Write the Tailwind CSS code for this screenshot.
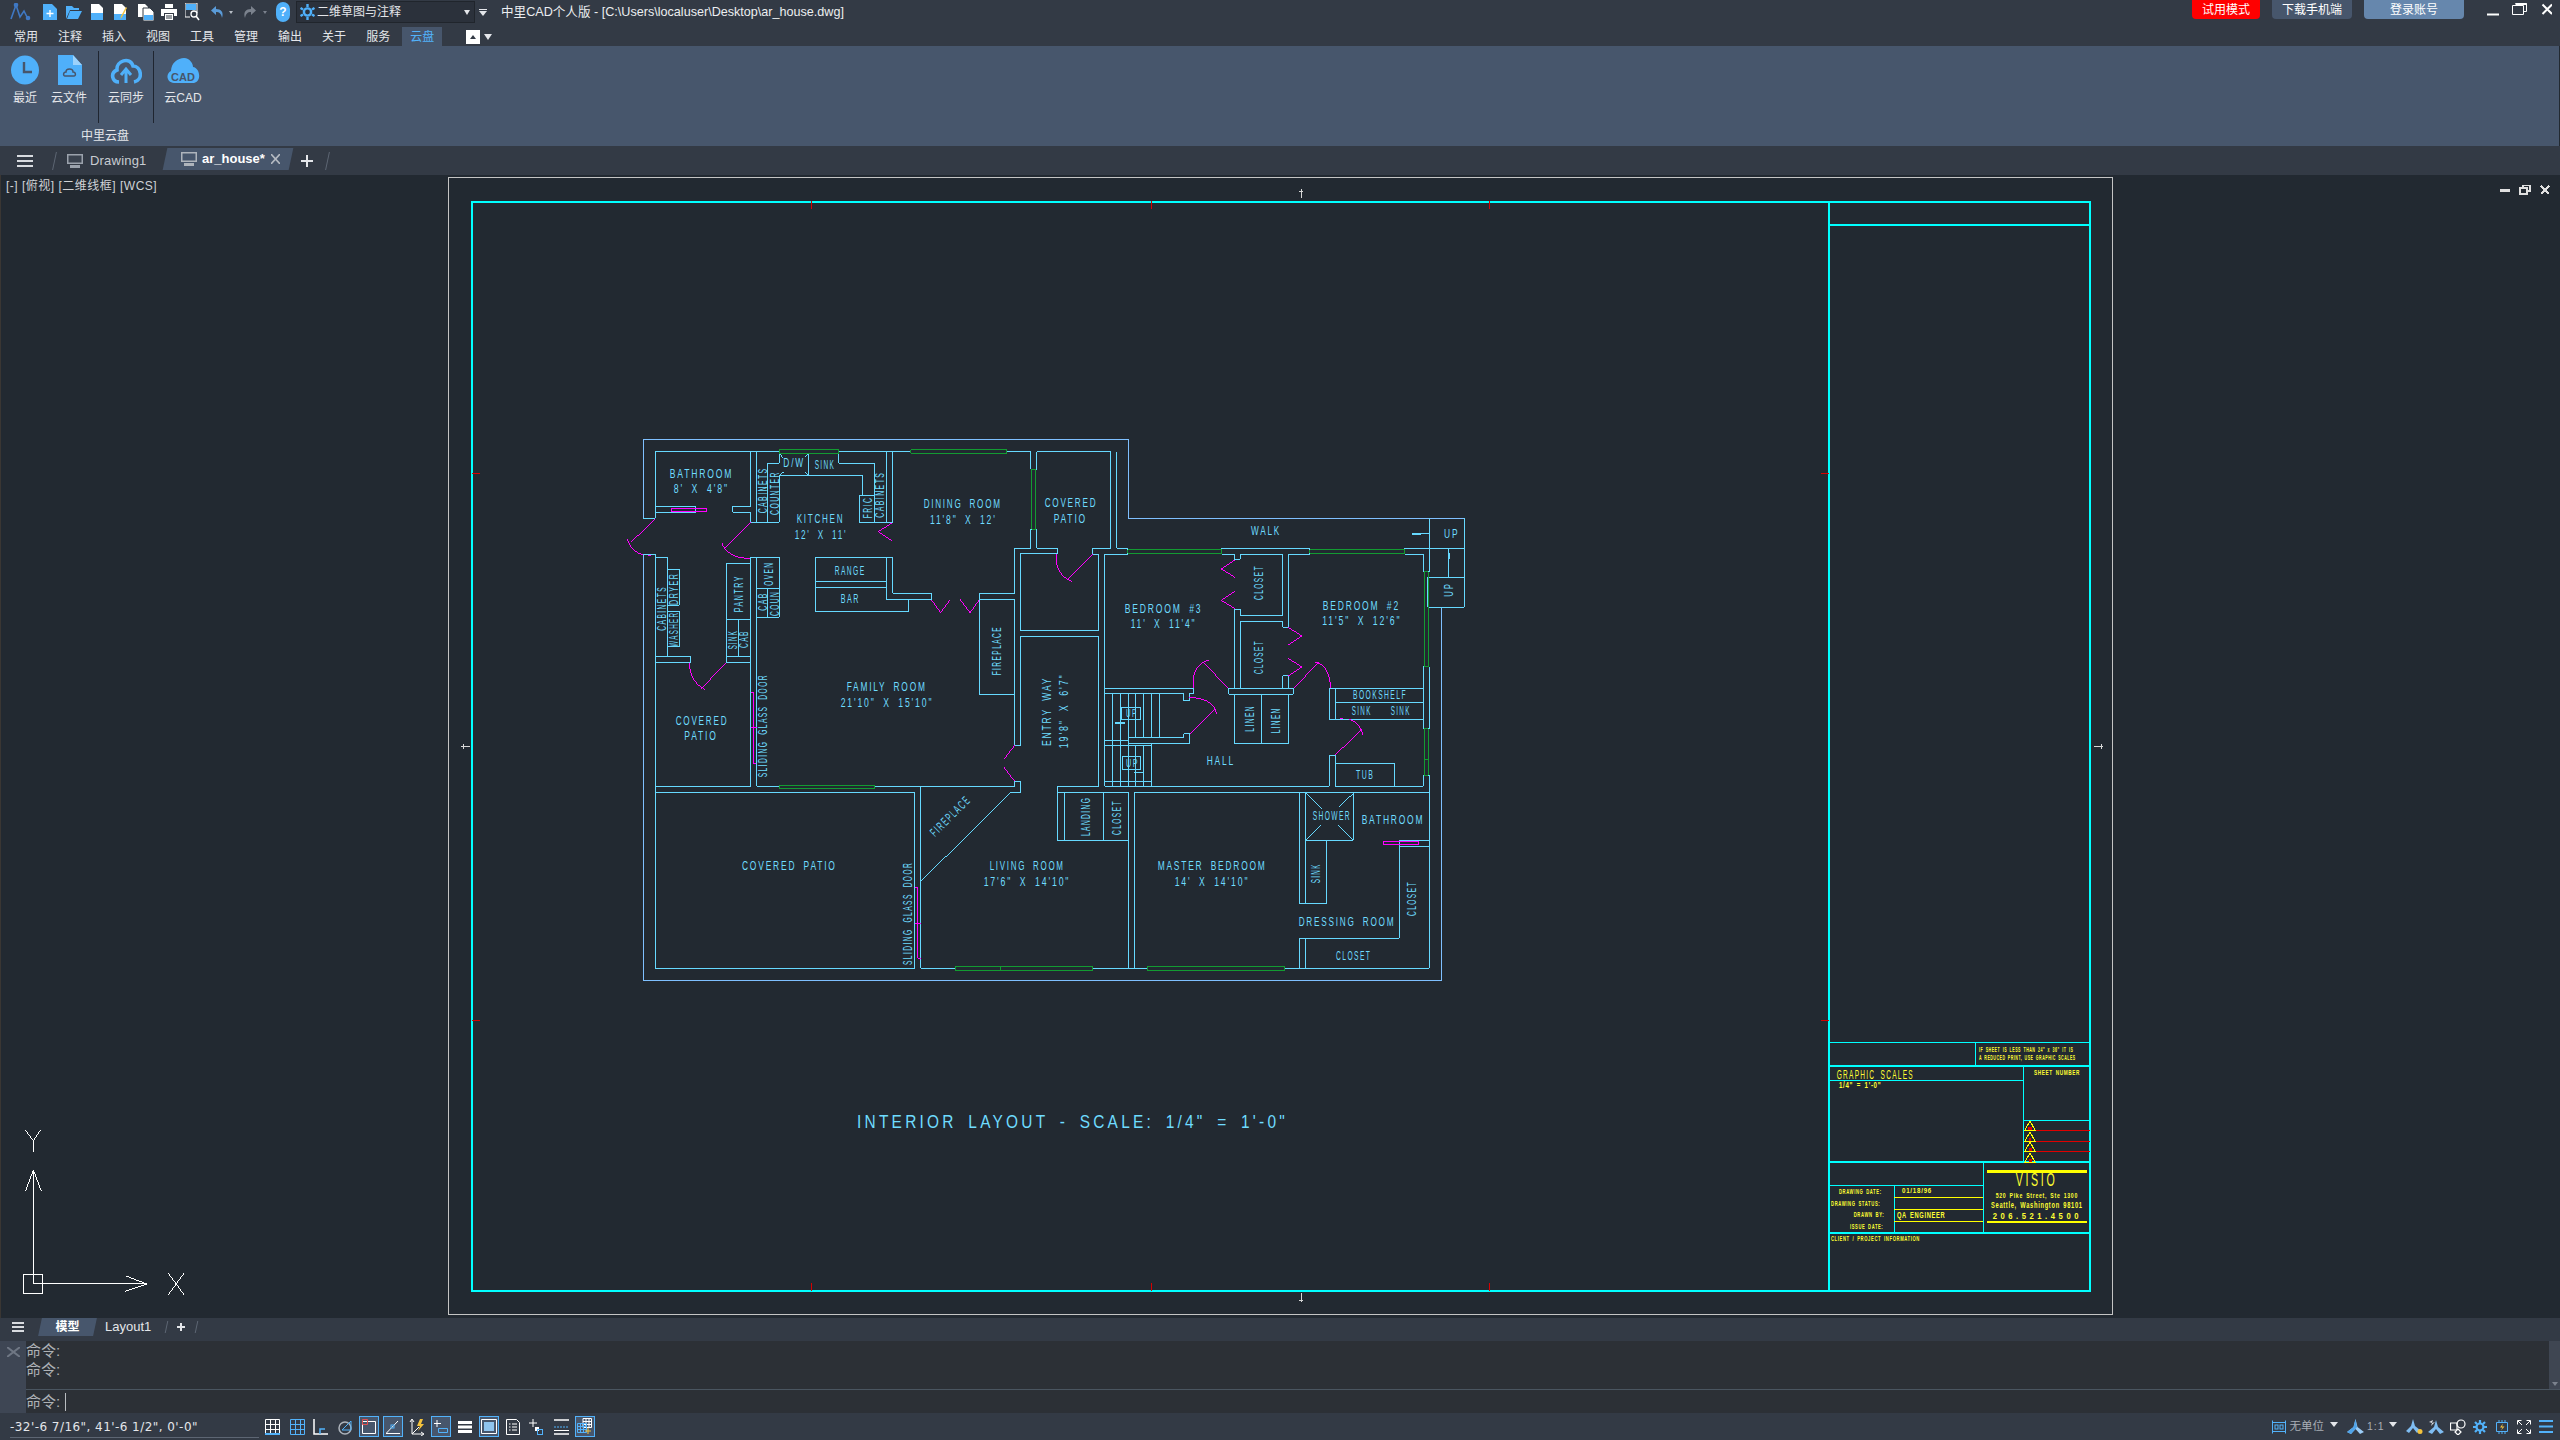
<!DOCTYPE html>
<html lang="zh">
<head>
<meta charset="utf-8">
<title>中里CAD</title>
<script src="https://cdn.jsdelivr.net/npm/@tailwindcss/browser@4"></script>
</head>
<body class="m-0 bg-[#222931] overflow-hidden">
<div class="w-[2560px] h-[1440px] flex flex-col font-['Liberation_Sans','Noto_Sans_CJK_SC',sans-serif] text-[12px] text-[#e4e6ea]">

  <!-- title row -->
  <div class="h-[27px] shrink-0 bg-[#333a45] flex items-start">
    <div class="h-[24px] flex items-center pl-[10px] w-full">
      <svg width="22" height="18" viewBox="0 0 22 18" fill="none" stroke="#3f78c4" stroke-width="1.6"><path d="M1 16 L6 2 L10 14 L14 8 L17 14"/><circle cx="6" cy="2" r="1.5" fill="#3f78c4"/><circle cx="18" cy="15" r="1.5" fill="#3f78c4"/></svg>
      <svg class="ml-[11px]" width="14" height="16" viewBox="0 0 14 16"><path d="M0 0H9L14 5V16H0Z" fill="#4fb0fa"/><path d="M7 6V13M3.5 9.5H10.5" stroke="#fff" stroke-width="1.4"/></svg>
      <svg class="ml-[9px]" width="16" height="14" viewBox="0 0 16 14"><path d="M0 14V1H6L8 3H13V5H4L0 14ZM4 6H16L12 14H1Z" fill="#4fb0fa"/></svg>
      <svg class="ml-[9px]" width="12" height="16" viewBox="0 0 12 16"><path d="M0 0H8L12 4V16H0Z" fill="#fff"/><path d="M0 9H12V16H0Z" fill="#4fb0fa"/></svg>
      <svg class="ml-[11px]" width="14" height="16" viewBox="0 0 14 16"><path d="M0 0H8L12 4V16H0Z" fill="#fff"/><path d="M0 10H12V16H0Z" fill="#4fb0fa"/><path d="M13 4L8 13L6.5 15L7 12L12 3Z" fill="#f3c23d"/></svg>
      <svg class="ml-[10px]" width="16" height="17" viewBox="0 0 16 17"><path d="M0 0H7L10 3V13H0Z" fill="#fff"/><path d="M5 4H12L16 8V17H5Z" fill="#fff" stroke="#333a45"/><path d="M6 11H15V16H6Z" fill="#4fb0fa"/></svg>
      <svg class="ml-[7px]" width="16" height="16" viewBox="0 0 16 16"><path d="M4 0H12V4H4ZM0 5H16V12H13V9H3V12H0Z" fill="#fff"/><path d="M4 10H12V16H4Z" fill="#fff"/><path d="M5 12H11M5 14H11" stroke="#333a45"/></svg>
      <svg class="ml-[8px]" width="15" height="18" viewBox="0 0 15 18" fill="none"><path d="M0 0H12V10M0 0V14H5" stroke="#fff" stroke-width="1"/><path d="M1 1H11V7H1Z" fill="#4fb0fa"/><circle cx="9" cy="11" r="3" stroke="#fff" stroke-width="1.3"/><path d="M11 13L14 17" stroke="#fff" stroke-width="1.5"/></svg>
      <svg class="ml-[11px]" width="13" height="13" viewBox="0 0 13 13" fill="none"><path d="M5 0L0 4.5L5 9V6C8 6 10 7 11 12C13 6 10 3 5 3Z" fill="#5a9bd8"/></svg>
      <span class="ml-[5px] w-0 h-0 border-x-[2px] border-x-transparent border-t-[3px] border-t-[#b8bec6]"></span>
      <svg class="ml-[10px]" width="13" height="13" viewBox="0 0 13 13"><path d="M8 0L13 4.5L8 9V6C5 6 3 7 2 12C0 6 3 3 8 3Z" fill="#7b828d"/></svg>
      <span class="ml-[7px] w-0 h-0 border-x-[2px] border-x-transparent border-t-[3px] border-t-[#7b828d]"></span>
      <span class="ml-[9px] w-[14px] h-[20px] rounded-full bg-[#4fb0fa] text-white text-[12px] font-bold flex items-center justify-center">?</span>
      <div class="ml-[6px] w-[179px] h-[22px] bg-[#2b313b] border border-[#20252c] flex items-center">
        <svg class="ml-[3px]" width="15" height="16" viewBox="0 0 15 16" fill="none" stroke="#4fb0fa"><circle cx="7.5" cy="8" r="3.6" stroke-width="2.4"/><path d="M7.5 0V3M7.5 13V16M0.5 4L3 5.5M12 10.5L14.500 12M0.500 12L3 10.5M12 5.500L14.500 4" stroke-width="2.400"/></svg>
        <span class="ml-[2px] text-[12px] text-[#e4e6ea]">二维草图与注释</span>
        <span class="ml-auto mr-[4px] w-0 h-0 border-x-[3px] border-x-transparent border-t-[5px] border-t-[#e4e6ea]"></span>
      </div>
      <span class="ml-[4px] flex flex-col items-center gap-[1px]"><span class="w-[8px] h-px bg-[#e4e6ea]"></span><span class="w-0 h-0 border-x-[4px] border-x-transparent border-t-[5px] border-t-[#e4e6ea]"></span></span>
      <span class="ml-[14px] text-[12.600px] text-[#eceef0] whitespace-nowrap">中里CAD个人版 - [C:\Users\localuser\Desktop\ar_house.dwg]</span>
      <div class="ml-auto self-start h-[19px] flex text-[12px]">
        <span class="w-[68px] h-[19px] rounded-b-[4px] bg-[#ff0000] text-white flex items-center justify-center">试用模式</span>
        <span class="ml-[12px] w-[80px] h-[19px] rounded-b-[4px] bg-[#47566c] text-white flex items-center justify-center">下载手机端</span>
        <span class="ml-[12px] w-[100px] h-[19px] rounded-b-[4px] bg-[#6687ad] text-white flex items-center justify-center">登录账号</span>
        <svg class="ml-[23px]" width="65" height="19" viewBox="0 0 65 19" fill="none" stroke="#fff"><path d="M0 14.500H12" stroke-width="2"/><path d="M25.500 5.500V14.500H36.500V5.500ZM28.500 3.500H39.500V11.500H36.500" stroke-width="1"/><path d="M28.500 4H39.500" stroke-width="2"/><path d="M55.500 4.500L65 14M65 4.500L55.500 14" stroke-width="2"/></svg>
        <span class="w-[8px]"></span>
      </div>
    </div>
  </div>

  <!-- menu row -->
  <div class="h-[19px] shrink-0 bg-[#333a45] flex items-center pl-[14px] gap-[20px] text-[12px] text-[#e4e6ea]">
    <span>常用</span><span>注释</span><span>插入</span><span>视图</span><span>工具</span><span>管理</span><span>输出</span><span>关于</span><span>服务</span>
    <span class="-mx-[8px] px-[8px] h-[19px] bg-[#47566c] text-[#52b2fa] flex items-center">云盘</span>
    <span class="ml-[12px] w-[14px] h-[14px] bg-white flex items-center justify-center"><span class="w-0 h-0 border-x-[3px] border-x-transparent border-b-[4px] border-b-[#333a45]"></span></span>
    <span class="-ml-[16px] w-0 h-0 border-x-[4px] border-x-transparent border-t-[6px] border-t-[#e4e6ea]"></span>
  </div>

  <!-- ribbon -->
  <div class="h-[100px] shrink-0 bg-[#47566c] mr-px">
    <div class="w-[212px] flex flex-col">
      <div class="flex h-[77px] pt-[5px]">
        <div class="ml-[4px] w-[42px] flex flex-col items-center pt-[4px]">
          <svg width="28" height="30" viewBox="0 0 28 30"><ellipse cx="14" cy="15" rx="14" ry="14.500" fill="#4fb0fa"/><path d="M13 7V17H21" fill="none" stroke="#47566c" stroke-width="2.400"/></svg>
          <span class="mt-[6px] leading-[14px]">最近</span>
        </div>
        <div class="w-[46px] flex flex-col items-center pt-[4px]">
          <svg width="25" height="30" viewBox="0 0 25 30"><path d="M1 0H16L25 10V30H1Z" fill="#4fb0fa"/><path d="M16 0L25 10H16Z" fill="#9cd2fb"/><path d="M8 21C6 21 6 17 9 17C9 13 16 13 16 17C19 17 19 21 17 21Z" fill="none" stroke="#47566c" stroke-width="1.500"/></svg>
          <span class="mt-[6px] leading-[14px]">云文件</span>
        </div>
        <span class="ml-[6px] w-px h-[72px] bg-[#1f2530]"></span>
        <div class="w-[54px] flex flex-col items-center pt-[4px]">
          <svg width="32" height="30" viewBox="0 0 32 30" fill="none"><path d="M9 27C2 27 0 18 7 15C6 6 20 1 23 11C31 11 34 25 24 27" stroke="#4fb0fa" stroke-width="3.600"/><path d="M16 28V15M11 20L16 14L21 20" stroke="#4fb0fa" stroke-width="3"/></svg>
          <span class="mt-[6px] leading-[14px]">云同步</span>
        </div>
        <span class="w-px h-[72px] bg-[#1f2530]"></span>
        <div class="w-[58px] flex flex-col items-center pt-[4px]">
          <svg width="34" height="30" viewBox="0 0 34 30"><path d="M8 28C1 28 -1 19 5 16C5 8 12 3 18 3C24 3 27 9 27 12C34 13 36 26 28 28Z" fill="#4fb0fa"/><text x="17" y="26" text-anchor="middle" font-size="11" font-weight="700" fill="#47566c">CAD</text></svg>
          <span class="mt-[6px] leading-[14px]">云CAD</span>
        </div>
      </div>
      <div class="pt-[6px] leading-[14px] text-center pr-[2px]">中里云盘</div>
    </div>
  </div>

  <!-- drawing tabs -->
  <div class="h-[29px] shrink-0 bg-[#333a45] flex items-center text-[13px]">
    <span class="ml-[17px] w-[16px] h-[12px] border-y-2 border-[#d8dbe0] flex items-center"><span class="w-full h-[2px] bg-[#d8dbe0]"></span></span>
    <span class="ml-[21px] w-px h-[18px] bg-[#5d6673] -skew-x-12"></span>
    <svg class="ml-[12px]" width="16" height="14" viewBox="0 0 16 14"><path d="M0 0H16V10H0Z" fill="#9ba2ac"/><path d="M1.500 1.500H14.500V8.500H1.500Z" fill="#3a424e"/><path d="M3 11H13V14H3Z" fill="#9ba2ac"/></svg>
    <span class="ml-[7px] w-[53px] text-[#c8ccd2] tracking-[0.2px]">Drawing1</span>
    <div class="relative self-start mt-[2px] ml-[22px] w-[126px] h-[22px] flex items-center">
      <span class="absolute inset-0 -skew-x-12 bg-[#47566c]"></span>
      <svg class="relative ml-[16px]" width="16" height="14" viewBox="0 0 16 14"><path d="M0 0H16V10H0Z" fill="#aeb4bc"/><path d="M1.500 1.500H14.500V8.500H1.500Z" fill="#47566c"/><path d="M3 11H13V14H3Z" fill="#aeb4bc"/></svg>
      <span class="relative ml-[5px] w-[60px] font-bold text-white whitespace-nowrap">ar_house*</span>
      <svg class="relative ml-[9px]" width="9" height="10" viewBox="0 0 9 10"><path d="M0 0L9 10M9 0L0 10" stroke="#b5bac2" stroke-width="1.600"/></svg>
    </div>
    <svg class="ml-[10px]" width="12" height="12" viewBox="0 0 12 12"><path d="M6 0V12M0 6H12" stroke="#e4e6ea" stroke-width="2"/></svg>
    <span class="ml-[14px] w-px h-[18px] bg-[#5d6673] -skew-x-12"></span>
  </div>

  <!-- canvas -->
  <div class="relative h-[1143px] shrink-0 bg-[#222931] border-l border-[#3a3633]">
    <div class="absolute left-[5px] top-[4px] text-[12px] leading-[14px] text-[#cfd2d6] tracking-[0.5px] whitespace-nowrap">[-] [俯视] [二维线框] [WCS]</div>
    <svg class="absolute -left-px top-0" width="2560" height="1143" viewBox="0 175 2560 1143" shape-rendering="crispEdges" fill="none">
      <!-- window controls -->
      <path d="M2500 190.500H2510" stroke="#e0e0e0" stroke-width="3"/>
      <path d="M2520 188H2527V194H2520ZM2523 188V185.500H2530V191H2527" stroke="#e0e0e0" stroke-width="1.500"/>
      <path d="M2541 186L2549 194M2549 186L2541 194" stroke="#e0e0e0" stroke-width="2"/>
      <!-- sheet -->
      <rect x="448.500" y="177.500" width="1664" height="1137" stroke="#c4c4c4"/>
      <rect x="472" y="202" width="1618" height="1089" stroke="#00ffff" stroke-width="2"/>
      <path d="M1829 202V1291M1829 225H2090M1829 1066H2090M1829 1162H2090M1829 1233H2090" stroke="#00ffff" stroke-width="2"/>
      <path d="M1829 1042.500H2090M1975.500 1042V1066M1829 1080.500H2023M2023.500 1066V1162M2023 1120.500H2090M1983.500 1162V1233M1829 1185.500H1983M1894.500 1185V1233" stroke="#00ffff"/>
      <path d="M1894 1197.500H1983M1894 1209.500H1983M1894 1221.500H1983" stroke="#ffff00"/>
      <path d="M1987 1171.500H2087" stroke="#ffff00" stroke-width="3"/>
      <path d="M1987 1222H2087" stroke="#ffff00" stroke-width="2"/>
      <path d="M2024 1130.500H2090M2024 1141.500H2090M2024 1151.500H2090" stroke="#e00000"/>
      <path d="M2025 1130L2030 1121L2035 1130ZM2025 1141L2030 1132L2035 1141ZM2025 1151L2030 1142L2035 1151ZM2025 1162L2030 1153L2035 1162Z" stroke="#ffff00"/>
      <path d="M2028 1128H2032M2029 1139H2031M2029 1149H2032M2029 1160H2032" stroke="#e00000" stroke-width="3"/>
      <!-- ticks -->
      <path d="M811.500 201V209M1151.500 201V209M1489.500 201V209M811.500 1283V1291M1151.500 1283V1291M1489.500 1283V1291M472 473.500H480M472 1020.500H480M1821 473.500H1829M1821 1020.500H1829" stroke="#d80000"/>
      <path d="M1301 189V198M1299 191H1303M1301 1293V1302M1299 1300H1303M461 746.500H470M463 744V749M2094 746.500H2103M2101 744V749" stroke="#d8d8d8"/>
      <!-- UCS -->
      <g transform="scale(.33333) translate(0 3300)" stroke="#ffffff" stroke-width="3">
        <path d="M70 523H128V580H70ZM100 215V552H440M76 274L100 210L124 274M378 528L440 552L376 574M76 90L100 122L122 90M100 122V155M505 520L552 584M552 520L505 584"/>
      </g>
      <!-- floor plan -->
      <g stroke-width="3">
        <g transform="translate(620 420) scale(.33333)" stroke="#66d9ff">
          <path stroke="#7fc0ff" d="M70 295V58H1525M70 403V1020"/>
          <path d="M70 295H106M106 95V295M106 95H478M656 95H873M1160 95H1232M1250 95H1473M106 259H228V277H106M392 95V259H338V277H392V307M410 95V307M392 307H478M442 307V130H478V100M478 307V166H727V226M566 100V166M656 100V130H763V307M727 226H718V307M718 226H763M718 307H818M800 95V307M818 95V307"/>
          <path d="M478 100L490 115M566 100L555 112M478 166L492 155M566 166L555 155"/>
          <path d="M1232 95V148H1250V95M1232 328H1250M1232 328V385H1184V520H1078M1250 328V385H1313V402H1201V631H1436V403H1417V385H1473V95M1490 95V385H1523"/>
          <path d="M70 403H106M106 403V1020M106 412H142V710M392 412V1020M410 412V1020M392 412H478V592H410M410 505H478M442 505V592M320 430H392M320 430V728H392M320 598H392M356 598V710M320 710H392M144 448H178V556H144M144 574H178V681H144M106 710H212V728H106"/>
          <path d="M586 412H818V520H934V539H800V412M586 412V575H866V539M586 484H800M586 502H800M1078 520V824H1184M1078 538H1184V976H1202V649H1436V1020M1184 824V976"/>
          <path stroke="#139b32" d="M478 89H656V101H478ZM873 89H1160V100H873ZM1235 148H1247V328H1235Z"/>
          <g stroke="#ff00ff">
            <path d="M154 265H260V274H154ZM106 296L32 368M22 358C30 385 50 400 70 404M85 406H92M392 307L315 385M306 370C315 395 340 415 390 415M817 308L775 335L815 362M1418 403L1342 480M1310 403C1305 440 1320 470 1355 484M934 539L962 578L990 540M1020 538L1050 578L1078 540M392 817H400V1020M392 922H410M318 728L244 806M210 728C205 760 225 795 255 808"/>
          </g>
        </g>
        <g transform="translate(1000 420) scale(.33333)" stroke="#66d9ff">
          <path stroke="#7fc0ff" d="M385 58V295H1393M1325 562V1020"/>
          <path d="M314 403V1020M383 403H314M314 805H580V822H568V842H551V822H314M383 385V403M665 385H929V403H865V622M665 385V403H703V418H721V403H848V586H721V568H703V805M721 604H848V622H865M865 768V805M848 768H865M848 768V805M721 604V805M686 805H880V823H686V805M703 823V970H866V823M785 823V970M1214 385H1393M1214 385V403H1272V455H1288V295M1288 385H1393M1347 385V472M1284 472H1393M1284 472V562H1393M1393 295V562M1270 740H1288V926H1270V740M988 805H1270M1006 805V898M988 805V898H1270M1006 848H1270M296 649V1020"/>
          <path d="M337 823V1020M361 823V1020M385 823V1020M408 823V950M432 823V950M455 823V950M479 823V950M386 952H551V942H569V970H386V952M314 961H385M314 977H385M385 970H455M455 970V1020M408 977V1020M432 977V1020M364 862H422V900H364ZM1288 342H1236"/>
          <path stroke-width="6" d="M1236 342H1262M345 909H375M1347 398V416"/>
          <path stroke="#139b32" d="M383 389H665V400H383ZM929 389H1214V400H929ZM1273 455H1285V740H1273ZM1273 926H1285V1020H1273Z"/>
          <path stroke="#ff00ff" d="M705 420L664 447L705 472M705 514L664 541L705 566M865 622L905 648L865 675M865 715L905 741L865 768M686 805L610 728M627 720C590 730 575 760 580 805M880 805L958 726M945 726C975 730 995 770 990 805M568 834C610 830 645 850 650 882M570 942L645 868M1020 896H1030M1048 898C1070 905 1085 925 1088 945"/>
        </g>
        <g transform="translate(620 700) scale(.33333)" stroke="#66d9ff">
          <path stroke="#7fc0ff" d="M70 180V841H1500"/>
          <path d="M106 180V805H884M106 259H392M106 277H884V805M902 259V805M392 180V259M410 180V259H478M764 259H1184V244H1202V277H1172M902 805H1008M1418 805H1500M902 545L1172 277"/>
          <path stroke="#139b32" d="M478 256H764V266H478ZM1008 799H1418V812H1008Z"/>
          <path stroke="#ff00ff" d="M400 180V190H408M1184 136L1152 178M1152 202L1184 244M884 562H893V775H902M884 670H902"/>
        </g>
        <g transform="translate(1000 700) scale(.33333)" stroke="#66d9ff">
          <path stroke="#7fc0ff" d="M0 841H1325V180"/>
          <path d="M296 180V259H172V421H385M172 277H385V805M193 277V421M310 277V421M403 277V805M314 180V259H988V166H1006V259M403 277H1288V805M1006 190H1184V259M1006 259H1270V226H1288V277M898 277V610H980V421H916M916 277V610M1060 277V421H916M918 280L965 326M1060 280L1018 320M962 376L918 420M1014 376L1058 420M1198 421H1288M1198 439H1288M1198 421V715H898V805M916 715V805M277 805H442M853 805H1288M314 122H385M314 137H455M455 180V259M408 180V259M432 180V259M314 245H455M337 180V259M361 180V259M385 180V259M367 170H422V208H367ZM402 218H430"/>
          <path stroke="#139b32" d="M0 799H277V812H0ZM442 799H853V812H442ZM1273 180V226H1285V180"/>
          <path stroke="#ff00ff" d="M1150 424H1256V434H1150ZM1006 165L1085 88"/>
        </g>
      </g>
      <!-- plan text -->
      <g fill="#6fdcff" stroke="none" shape-rendering="auto" font-family="Liberation Sans">
        <text x="857" y="1128" font-size="19" letter-spacing="4" word-spacing="5" lengthAdjust="spacingAndGlyphs" textLength="431">INTERIOR LAYOUT -   SCALE: 1/4" = 1'-0"</text>
        <g transform="translate(620 420) scale(.33333)" font-size="37" letter-spacing="8" word-spacing="14">
          <text lengthAdjust="spacingAndGlyphs" x="149" y="174" textLength="191">BATHROOM</text>
          <text lengthAdjust="spacingAndGlyphs" x="161" y="220" textLength="166">8' X 4'8"</text>
          <text lengthAdjust="spacingAndGlyphs" x="440" y="280" textLength="138" transform="rotate(-90 440 280)">CABINETS</text>
          <text lengthAdjust="spacingAndGlyphs" x="476" y="285" textLength="132" transform="rotate(-90 476 285)">COUNTER</text>
          <text lengthAdjust="spacingAndGlyphs" x="490" y="142" textLength="65">D/W</text>
          <text lengthAdjust="spacingAndGlyphs" x="584" y="148" textLength="62">SINK</text>
          <text lengthAdjust="spacingAndGlyphs" x="757" y="295" textLength="65" transform="rotate(-90 757 295)">FRIC</text>
          <text lengthAdjust="spacingAndGlyphs" x="792" y="293" textLength="138" transform="rotate(-90 792 293)">CABINETS</text>
          <text lengthAdjust="spacingAndGlyphs" x="530" y="310" textLength="143">KITCHEN</text>
          <text lengthAdjust="spacingAndGlyphs" x="524" y="356" textLength="158">12' X 11'</text>
          <text lengthAdjust="spacingAndGlyphs" x="911" y="264" textLength="234">DINING ROOM</text>
          <text lengthAdjust="spacingAndGlyphs" x="930" y="311" textLength="200">11'8" X 12'</text>
          <text lengthAdjust="spacingAndGlyphs" x="1274" y="261" textLength="158">COVERED</text>
          <text lengthAdjust="spacingAndGlyphs" x="1301" y="308" textLength="100">PATIO</text>
          <text lengthAdjust="spacingAndGlyphs" x="644" y="464" textLength="93">RANGE</text>
          <text lengthAdjust="spacingAndGlyphs" x="662" y="549" textLength="58">BAR</text>
          <text lengthAdjust="spacingAndGlyphs" x="458" y="497" textLength="72" transform="rotate(-90 458 497)">OVEN</text>
          <text lengthAdjust="spacingAndGlyphs" x="440" y="572" textLength="55" transform="rotate(-90 440 572)">CAB</text>
          <text lengthAdjust="spacingAndGlyphs" x="476" y="588" textLength="76" transform="rotate(-90 476 588)">COUN</text>
          <text lengthAdjust="spacingAndGlyphs" x="369" y="577" textLength="112" transform="rotate(-90 369 577)">PANTRY</text>
          <text lengthAdjust="spacingAndGlyphs" x="350" y="688" textLength="58" transform="rotate(-90 350 688)">SINK</text>
          <text lengthAdjust="spacingAndGlyphs" x="384" y="684" textLength="54" transform="rotate(-90 384 684)">CAB</text>
          <text lengthAdjust="spacingAndGlyphs" x="137" y="632" textLength="134" transform="rotate(-90 137 632)">CABINETS</text>
          <text lengthAdjust="spacingAndGlyphs" x="173" y="555" textLength="97" transform="rotate(-90 173 555)">DRYER</text>
          <text lengthAdjust="spacingAndGlyphs" x="173" y="680" textLength="105" transform="rotate(-90 173 680)">WASHER</text>
          <text lengthAdjust="spacingAndGlyphs" x="1144" y="766" textLength="148" transform="rotate(-90 1144 766)">FIREPLACE</text>
          <text lengthAdjust="spacingAndGlyphs" x="1294" y="978" textLength="208" transform="rotate(-90 1294 978)">ENTRY WAY</text>
          <text lengthAdjust="spacingAndGlyphs" x="1344" y="985" textLength="225" transform="rotate(-90 1344 985)">19'8" X 6'7"</text>
          <text lengthAdjust="spacingAndGlyphs" x="680" y="814" textLength="240">FAMILY ROOM</text>
          <text lengthAdjust="spacingAndGlyphs" x="662" y="861" textLength="278">21'10" X 15'10"</text>
          <text lengthAdjust="spacingAndGlyphs" x="441" y="1072" textLength="310" transform="rotate(-90 441 1072)">SLIDING GLASS DOOR</text>
          <text lengthAdjust="spacingAndGlyphs" x="167" y="914" textLength="158">COVERED</text>
          <text lengthAdjust="spacingAndGlyphs" x="193" y="960" textLength="100">PATIO</text>
        </g>
        <g transform="translate(620 700) scale(.33333)" font-size="37" letter-spacing="8" word-spacing="14">
          <text lengthAdjust="spacingAndGlyphs" x="366" y="510" textLength="284">COVERED PATIO</text>
          <text lengthAdjust="spacingAndGlyphs" x="1109" y="510" textLength="225">LIVING ROOM</text>
          <text lengthAdjust="spacingAndGlyphs" x="1091" y="558" textLength="260">17'6" X 14'10"</text>
          <text lengthAdjust="spacingAndGlyphs" x="875" y="795" textLength="310" transform="rotate(-90 875 795)">SLIDING GLASS DOOR</text>
          <text lengthAdjust="spacingAndGlyphs" x="945" y="412" textLength="155" transform="rotate(-45 945 412)">FIREPLACE</text>
        </g>
        <g transform="translate(1000 420) scale(.33333)" font-size="37" letter-spacing="8" word-spacing="14">
          <text lengthAdjust="spacingAndGlyphs" x="753" y="345" textLength="90">WALK</text>
          <text lengthAdjust="spacingAndGlyphs" x="1332" y="355" textLength="46">UP</text>
          <text lengthAdjust="spacingAndGlyphs" x="1360" y="530" textLength="43" transform="rotate(-90 1360 530)">UP</text>
          <text lengthAdjust="spacingAndGlyphs" x="374" y="578" textLength="233">BEDROOM #3</text>
          <text lengthAdjust="spacingAndGlyphs" x="392" y="625" textLength="197">11' X 11'4"</text>
          <text lengthAdjust="spacingAndGlyphs" x="789" y="540" textLength="105" transform="rotate(-90 789 540)">CLOSET</text>
          <text lengthAdjust="spacingAndGlyphs" x="790" y="762" textLength="102" transform="rotate(-90 790 762)">CLOSET</text>
          <text lengthAdjust="spacingAndGlyphs" x="968" y="569" textLength="232">BEDROOM #2</text>
          <text lengthAdjust="spacingAndGlyphs" x="967" y="616" textLength="237">11'5" X 12'6"</text>
          <text lengthAdjust="spacingAndGlyphs" x="1059" y="838" textLength="162">BOOKSHELF</text>
          <text lengthAdjust="spacingAndGlyphs" x="1055" y="885" textLength="60">SINK</text>
          <text lengthAdjust="spacingAndGlyphs" x="1172" y="885" textLength="60">SINK</text>
          <text lengthAdjust="spacingAndGlyphs" x="762" y="935" textLength="80" transform="rotate(-90 762 935)">LINEN</text>
          <text lengthAdjust="spacingAndGlyphs" x="840" y="940" textLength="78" transform="rotate(-90 840 940)">LINEN</text>
          <text lengthAdjust="spacingAndGlyphs" x="378" y="892" textLength="35" font-size="34">UP</text>
        </g>
        <g transform="translate(1000 700) scale(.33333)" font-size="37" letter-spacing="8" word-spacing="14">
          <text lengthAdjust="spacingAndGlyphs" x="378" y="200" textLength="40" font-size="34">UP</text>
          <text lengthAdjust="spacingAndGlyphs" x="620" y="194" textLength="85">HALL</text>
          <text lengthAdjust="spacingAndGlyphs" x="1068" y="238" textLength="55">TUB</text>
          <text lengthAdjust="spacingAndGlyphs" x="270" y="408" textLength="118" transform="rotate(-90 270 408)">LANDING</text>
          <text lengthAdjust="spacingAndGlyphs" x="364" y="405" textLength="105" transform="rotate(-90 364 405)">CLOSET</text>
          <text lengthAdjust="spacingAndGlyphs" x="938" y="360" textLength="115">SHOWER</text>
          <text lengthAdjust="spacingAndGlyphs" x="1085" y="371" textLength="188">BATHROOM</text>
          <text lengthAdjust="spacingAndGlyphs" x="473" y="510" textLength="327">MASTER BEDROOM</text>
          <text lengthAdjust="spacingAndGlyphs" x="524" y="557" textLength="224">14' X 14'10"</text>
          <text lengthAdjust="spacingAndGlyphs" x="960" y="550" textLength="60" transform="rotate(-90 960 550)">SINK</text>
          <text lengthAdjust="spacingAndGlyphs" x="1248" y="648" textLength="105" transform="rotate(-90 1248 648)">CLOSET</text>
          <text lengthAdjust="spacingAndGlyphs" x="896" y="678" textLength="290">DRESSING ROOM</text>
          <text lengthAdjust="spacingAndGlyphs" x="1008" y="780" textLength="106">CLOSET</text>
        </g>
        <!-- title block text -->
        <g transform="translate(1810 1020) scale(.33333)" fill="#ffff33" font-size="20" font-weight="700" letter-spacing="3" word-spacing="5">
          <text lengthAdjust="spacingAndGlyphs" x="507" y="96" textLength="283">IF SHEET IS LESS THAN 24" x 36" IT IS</text>
          <text lengthAdjust="spacingAndGlyphs" x="507" y="121" textLength="290">A REDUCED PRINT, USE GRAPHIC SCALES</text>
          <text lengthAdjust="spacingAndGlyphs" x="80" y="176" textLength="232" font-size="36" font-weight="400" letter-spacing="7" word-spacing="12">GRAPHIC SCALES</text>
          <text lengthAdjust="spacingAndGlyphs" x="87" y="205" textLength="127" font-size="26">1/4" = 1'-0"</text>
          <text lengthAdjust="spacingAndGlyphs" x="672" y="166" textLength="138" font-size="23">SHEET NUMBER</text>
          <text lengthAdjust="spacingAndGlyphs" x="617" y="498" textLength="125" font-size="56" font-weight="400" letter-spacing="14">VISIO</text>
          <text lengthAdjust="spacingAndGlyphs" x="557" y="535" textLength="247" font-size="23">520 Pike Street, Ste 1300</text>
          <text lengthAdjust="spacingAndGlyphs" x="543" y="565" textLength="275" font-size="25">Seattle, Washington 98101</text>
          <text lengthAdjust="spacingAndGlyphs" x="548" y="598" textLength="268" font-size="26" letter-spacing="12">206.521.4500</text>
          <text lengthAdjust="spacingAndGlyphs" x="87" y="521" textLength="128">DRAWING DATE:</text>
          <text lengthAdjust="spacingAndGlyphs" x="63" y="557" textLength="148">DRAWING STATUS:</text>
          <text lengthAdjust="spacingAndGlyphs" x="131" y="592" textLength="92">DRAWN BY:</text>
          <text lengthAdjust="spacingAndGlyphs" x="120" y="628" textLength="100">ISSUE DATE:</text>
          <text lengthAdjust="spacingAndGlyphs" x="276" y="520" textLength="90" font-size="24">01/18/96</text>
          <text lengthAdjust="spacingAndGlyphs" x="261" y="595" textLength="145" font-size="26">QA ENGINEER</text>
          <text lengthAdjust="spacingAndGlyphs" x="63" y="663" textLength="267">CLIENT / PROJECT INFORMATION</text>
        </g>
      </g>
    </svg>
  </div>

  <!-- layout tabs -->
  <div class="h-[23px] shrink-0 bg-[#333a45] flex items-start text-[13px] text-[#e4e6ea]">
    <span class="ml-[12px] mt-[4px] w-[12px] h-[10px] border-y-2 border-[#d8dbe0] flex items-center"><span class="w-full h-[2px] bg-[#d8dbe0]"></span></span>
    <div class="relative ml-[16px] w-[55px] h-[18px] flex items-center justify-center">
      <span class="absolute inset-0 -skew-x-12 bg-[#47566c]"></span>
      <span class="relative text-[12px] font-bold text-white">模型</span>
    </div>
    <span class="ml-[10px] h-[18px] flex items-center">Layout1</span>
    <span class="ml-[15px] mt-[3px] w-px h-[12px] bg-[#5d6673] -skew-x-12"></span>
    <svg class="ml-[10px] mt-[5px]" width="8" height="8" viewBox="0 0 8 8"><path d="M4 0V8M0 4H8" stroke="#e4e6ea" stroke-width="2"/></svg>
    <span class="ml-[11px] mt-[3px] w-px h-[12px] bg-[#5d6673] -skew-x-12"></span>
  </div>

  <!-- command area -->
  <div class="h-[72px] shrink-0 bg-[#2c3036] flex">
    <div class="w-[26px] bg-[#3e4654] pt-[6px] pl-[7px]">
      <svg width="13" height="10" viewBox="0 0 13 10"><path d="M0 0L13 10M13 0L0 10" stroke="#6f7784" stroke-width="2"/></svg>
    </div>
    <div class="flex-1 flex flex-col text-[15px] text-[#aeb2b6]">
      <div class="h-[49px] shrink-0 flex border-b-[1px] border-[#4a5560]">
        <div class="flex-1 leading-[19px]"><div>命令:</div><div>命令:</div></div>
        <div class="w-[11px] bg-[#3f4652] flex justify-center items-end pb-[3px]"><span class="w-0 h-0 border-x-[3px] border-x-transparent border-t-[4px] border-t-[#7b828d]"></span></div>
      </div>
      <div class="flex-1 flex items-center leading-[22px]">命令:<span class="ml-[5px] w-px h-[18px] bg-[#b8bcc0]"></span></div>
    </div>
  </div>

  <!-- status bar -->
  <div class="h-[27px] shrink-0 bg-[#333a45] flex items-center">
    <div class="ml-[10px] w-[249px] h-[24px] self-end mb-[2px] pt-[2px] border-b border-[#5d6673] text-[12px] leading-[22px] text-[#e4e6ea] tracking-[0.45px] whitespace-nowrap font-['DejaVu_Sans',sans-serif]">-32'-6 7/16", 41'-6 1/2", 0'-0"</div>
    <svg class="ml-[6px]" width="15" height="16" viewBox="0 0 15 16" fill="none" stroke="#fff" stroke-width="1"><path d="M.5 .5H14.500V15.500H.5ZM5.500 .5V15.500M10.500 .5V15.500M.5 5.500H14.500M.5 10.500H14.500"/><path d="M0 15H15" stroke="#52b2fa" stroke-width="2"/></svg>
    <svg class="ml-[10px]" width="15" height="16" viewBox="0 0 15 16" fill="none" stroke="#52b2fa"><path d="M.5 .5H14.500V15.500H.5ZM5.500 .5V15.500M10.500 .5V15.500M.5 5.500H14.500M.5 10.500H14.500"/></svg>
    <svg class="ml-[8px]" width="15" height="16" viewBox="0 0 15 16" fill="none"><path d="M1 0V15H15" stroke="#fff" stroke-width="1.500"/><path d="M7 15V10H12" stroke="#52b2fa" stroke-width="1.500"/></svg>
    <svg class="ml-[10px]" width="14" height="16" viewBox="0 0 14 16" fill="none"><circle cx="7" cy="9" r="6" stroke="#aeb4bc" stroke-width="1.500"/><path d="M4 11H13V2Z" stroke="#52b2fa"/></svg>
    <span class="ml-[7px] w-[20px] h-[21px] bg-[#47566c] border border-[#52b2fa] flex items-center justify-center"><svg width="14" height="15" viewBox="0 0 14 15" fill="none"><path d="M.5 2.500H13.500V14.500H.5Z" stroke="#fff"/><path d="M.5 .5H5.500V5.500H.5Z" stroke="#e05050"/></svg></span>
    <span class="ml-[4px] w-[20px] h-[21px] bg-[#47566c] border border-[#52b2fa] flex items-center justify-center"><svg width="14" height="15" viewBox="0 0 14 15" fill="none"><path d="M0 14.500H14M0 14.500L12 2" stroke="#fff"/><rect x="5" y="6" width="3" height="3" stroke="#52b2fa"/></svg></span>
    <svg class="ml-[6px]" width="16" height="18" viewBox="0 0 16 18" fill="none"><path d="M3 2V16H14" stroke="#fff"/><path d="M3 16L10 9M1 4L3 1L5 4M12 14L15 16L12 18" stroke="#fff"/><path d="M11 1L8 8H11L9 13L15 6H12L14 1Z" fill="#f3c23d"/></svg>
    <span class="ml-[6px] w-[20px] h-[21px] bg-[#47566c] border border-[#52b2fa] flex items-center justify-center"><svg width="14" height="14" viewBox="0 0 14 14" fill="none"><path d="M3 0V7M0 3.500H7" stroke="#fff"/><path d="M4.500 8.500H13.500V12.500H4.500Z" stroke="#52b2fa"/></svg></span>
    <svg class="ml-[7px]" width="14" height="12" viewBox="0 0 14 12"><path d="M0 1.500H14M0 6H14M0 10.500H14" stroke="#fff" stroke-width="3"/></svg>
    <span class="ml-[7px] w-[20px] h-[21px] bg-[#47566c] border border-[#52b2fa] flex items-center justify-center"><svg width="16" height="15" viewBox="0 0 16 15"><path d="M.5 .5H15.500V14.500H.5Z" fill="none" stroke="#fff"/><path d="M3 3H13V12H3Z" fill="#8fc4ee"/></svg></span>
    <svg class="ml-[7px]" width="14" height="16" viewBox="0 0 14 16" fill="none" stroke="#fff"><path d="M.5 .5H10.500L13.500 3.500V15.500H.5Z"/><path d="M3 5H4.500M6 5H11M3 8H4.500M6 8H11M3 11H4.500M6 11H11"/></svg>
    <svg class="ml-[9px]" width="14" height="16" viewBox="0 0 14 16" fill="none"><path d="M4 0V8M0 4H8" stroke="#fff"/><rect x="6" y="8" width="4" height="4" fill="#fff"/><rect x="8.500" y="10.500" width="5" height="5" stroke="#52b2fa"/></svg>
    <svg class="ml-[11px]" width="15" height="16" viewBox="0 0 15 16" fill="none"><path d="M0 1H15M0 15H15" stroke="#fff" stroke-width="1.500"/><path d="M0 8H15" stroke="#52b2fa" stroke-dasharray="2 1"/><path d="M0 11.500H15" stroke="#fff"/></svg>
    <span class="ml-[6px] w-[20px] h-[21px] bg-[#47566c] border border-[#52b2fa] flex items-center justify-center"><svg width="16" height="17" viewBox="0 0 16 17" fill="none"><path d="M6 .5H14.500V9.500H6ZM9 .5V9.500M12 .5V9.500M6 3.500H14.500M6 6.500H14.500" stroke="#fff"/><path d="M.5 5.500H9.500V14.500H.5ZM3.500 5.500V14.500M6.500 5.500V14.500M.5 8.500H9.500M.5 11.500H9.500" stroke="#52b2fa"/><path d="M11 10V16M8 13H14" stroke="#f3c23d"/></svg></span>

    <div class="ml-auto mr-[7px] flex items-center">
      <svg width="14" height="14" viewBox="0 0 14 14" fill="none" stroke="#52b2fa"><path d="M.5 .5V13.500M13.500 .5V13.500M0 2.500H14M0 11.500H14"/><rect x="3" y="5" width="3" height="4"/><rect x="8" y="5" width="3" height="4"/></svg>
      <span class="ml-[4px] text-[11.500px] text-[#a9aeb5]">无单位</span>
      <span class="ml-[6px] mb-[4px] w-0 h-0 border-x-[4.500px] border-x-transparent border-t-[5px] border-t-[#e4e6ea]"></span>
      <svg class="ml-[9px]" width="17" height="16" viewBox="0 0 17 16"><path d="M8.500 0L10.500 8L17 13L13 15L8.500 10L4 15L0 13L6.500 8Z" fill="#9ccdf7"/><path d="M8.500 0L10 8L8.500 10L4 15L0 13L6.500 8Z" fill="#4fa4ea"/></svg>
      <span class="ml-[3px] w-[16px] text-[10.500px] text-[#a9aeb5] tracking-[1px]">1:1</span>
      <span class="ml-[6px] mb-[4px] w-0 h-0 border-x-[4.500px] border-x-transparent border-t-[5px] border-t-[#e4e6ea]"></span>
      <svg class="ml-[9px]" width="17" height="16" viewBox="0 0 17 16"><path d="M7 0L9 7L14 11L11 14L7 9L3 14L0 12L5 7Z" fill="#7fbdf2"/><circle cx="14" cy="12.500" r="2.500" fill="#f3c23d"/></svg>
      <svg class="ml-[5px]" width="16" height="16" viewBox="0 0 16 16"><path d="M8 1L10 8L16 13L12 15L8 10L4 15L0 13L6 8Z" fill="#7fbdf2"/><path d="M1 3L5 1L4 4L7 3L3 7L4 4Z" fill="#d8dbe0"/></svg>
      <svg class="ml-[6px]" width="16" height="16" viewBox="0 0 16 16" fill="none" stroke="#fff" stroke-width="1.200"><path d="M.5 4H7V11H.5Z"/><circle cx="11" cy="5" r="4"/><path d="M8 10L11 13L8 16L5 13Z" fill="#333a45"/></svg>
      <svg class="ml-[7px]" width="14" height="14" viewBox="0 0 14 14" fill="none" stroke="#52b2fa" stroke-width="2.200"><circle cx="7" cy="7" r="3.500"/><path d="M7 0V3M7 11V14M0 7H3M11 7H14M2 2L4 4M10 10L12 12M12 2L10 4M4 10L2 12"/></svg>
      <svg class="ml-[8px]" width="14" height="14" viewBox="0 0 14 14" fill="none"><path d="M1.500 2.500H12.500V11.500H1.500ZM4 0V2M7 0V2M10 0V2M4 12V14M7 12V14M10 12V14" stroke="#52b2fa"/><path d="M8 3.500L5 7.500H7.500L6 10.500L9.500 6.500H7Z" fill="#f3c23d"/></svg>
      <svg class="ml-[8px]" width="14" height="14" viewBox="0 0 14 14" fill="none" stroke="#fff"><path d="M.5 4.500V.5H4.500M9.500 .5H13.500V4.500M13.500 9.500V13.500H9.500M4.500 13.500H.5V9.500M1 1L5 5M13 1L9 5M13 13L9 9M1 13L5 9"/></svg>
      <svg class="ml-[8px]" width="14" height="13" viewBox="0 0 14 13"><path d="M0 1H14M0 6.500H14M0 12H14" stroke="#52b2fa" stroke-width="2"/></svg>
    </div>
  </div>
</div>
</body>
</html>
